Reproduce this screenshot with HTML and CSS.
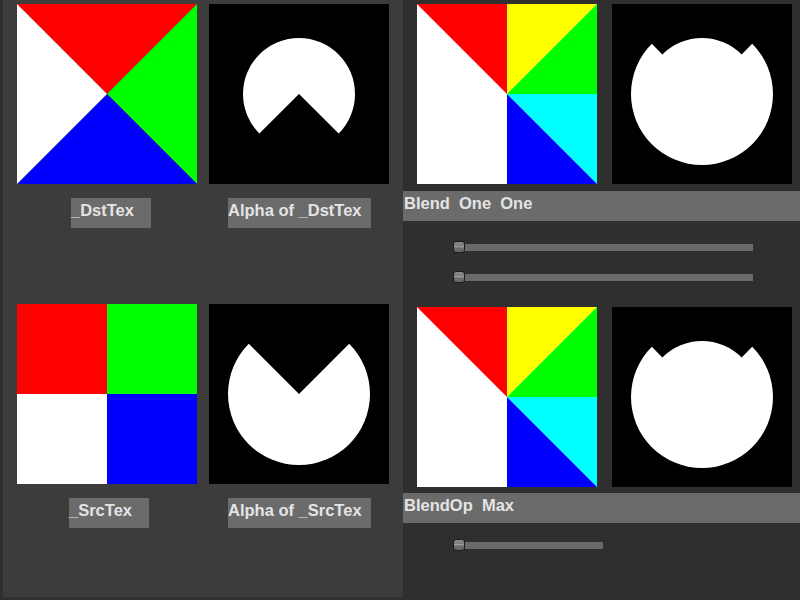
FILE: index.html
```html
<!DOCTYPE html>
<html>
<head>
<meta charset="utf-8">
<link rel="stylesheet" href="styles.css">
</head>
<body>
<div class="screen">
  <section class="inputs">
    <div class="tex-grid">
      <svg class="tex" viewBox="0 0 180 180" width="180" height="180">
        <polygon points="0,0 180,0 90,90" fill="#ff0000"/>
        <polygon points="180,0 180,180 90,90" fill="#00ff00"/>
        <polygon points="0,180 180,180 90,90" fill="#0000ff"/>
        <polygon points="0,0 0,180 90,90" fill="#ffffff"/>
      </svg>
      <svg class="tex" viewBox="0 0 180 180" width="180" height="180">
        <rect width="180" height="180" fill="#000"/>
        <path d="M90,90 L129.6,129.6 A56,56 0 1 0 50.4,129.6 Z" fill="#fff"/>
      </svg>
      <div class="label label-dst">_DstTex</div>
      <div class="label label-alpha">Alpha of _DstTex</div>
    </div>
    <div class="tex-grid second">
      <svg class="tex" viewBox="0 0 180 180" width="180" height="180">
        <rect x="0" y="0" width="90" height="90" fill="#ff0000"/>
        <rect x="90" y="0" width="90" height="90" fill="#00ff00"/>
        <rect x="0" y="90" width="90" height="90" fill="#ffffff"/>
        <rect x="90" y="90" width="90" height="90" fill="#0000ff"/>
      </svg>
      <svg class="tex" viewBox="0 0 180 180" width="180" height="180">
        <rect width="180" height="180" fill="#000"/>
        <path d="M90,90 L39.8,39.8 A71,71 0 1 0 140.2,39.8 Z" fill="#fff"/>
      </svg>
      <div class="label label-src">_SrcTex</div>
      <div class="label label-alpha">Alpha of _SrcTex</div>
    </div>
  </section>
  <section class="results">
    <div class="result-row">
      <svg class="tex" viewBox="0 0 180 180" width="180" height="180">
        <rect x="0" y="0" width="180" height="180" fill="#fff"/>
        <polygon points="0,0 90,0 90,90" fill="#ff0000"/>
        <polygon points="90,0 180,0 90,90" fill="#ffff00"/>
        <polygon points="180,0 180,90 90,90" fill="#00ff00"/>
        <polygon points="90,90 180,90 180,180" fill="#00ffff"/>
        <polygon points="90,90 180,180 90,180" fill="#0000ff"/>
      </svg>
      <svg class="tex" viewBox="0 0 180 180" width="180" height="180">
        <rect width="180" height="180" fill="#000"/>
        <path d="M39.8,39.8 L50.4,50.4 A56,56 0 0 1 129.6,50.4 L140.2,39.8 A71,71 0 1 1 39.8,39.8 Z" fill="#fff"/>
      </svg>
    </div>
    <div class="bar">Blend&nbsp;&nbsp;One&nbsp;&nbsp;One</div>
    <div class="sliders">
      <div class="slider"><div class="track long"></div><div class="knob"></div></div>
      <div class="slider"><div class="track long"></div><div class="knob"></div></div>
    </div>
    <div class="result-row second">
      <svg class="tex" viewBox="0 0 180 180" width="180" height="180">
        <rect x="0" y="0" width="180" height="180" fill="#fff"/>
        <polygon points="0,0 90,0 90,90" fill="#ff0000"/>
        <polygon points="90,0 180,0 90,90" fill="#ffff00"/>
        <polygon points="180,0 180,90 90,90" fill="#00ff00"/>
        <polygon points="90,90 180,90 180,180" fill="#00ffff"/>
        <polygon points="90,90 180,180 90,180" fill="#0000ff"/>
      </svg>
      <svg class="tex" viewBox="0 0 180 180" width="180" height="180">
        <rect width="180" height="180" fill="#000"/>
        <path d="M39.8,39.8 L50.4,50.4 A56,56 0 0 1 129.6,50.4 L140.2,39.8 A71,71 0 1 1 39.8,39.8 Z" fill="#fff"/>
      </svg>
    </div>
    <div class="bar">BlendOp&nbsp;&nbsp;Max</div>
    <div class="sliders single">
      <div class="slider"><div class="track short"></div><div class="knob"></div></div>
    </div>
  </section>
</div>
</body>
</html>
```
FILE: styles.css
```css
html, body {
  margin: 0;
  padding: 0;
  background: #2f2f2f;
  width: 800px;
  height: 600px;
  overflow: hidden;
}
.screen {
  display: flex;
  width: 800px;
  height: 600px;
  font-family: "Liberation Sans", Arial, sans-serif;
}
.inputs {
  width: 400px;
  height: 597px;
  margin-left: 3px;
  background: #3c3c3c;
  padding: 4px 0 0 14px;
  box-sizing: border-box;
}
.tex-grid {
  display: grid;
  grid-template-columns: 180px 180px;
  column-gap: 12px;
  row-gap: 14px;
}
.tex-grid.second {
  margin-top: 76px;
}
.tex {
  display: block;
}
.label {
  justify-self: start;
  height: 30px;
  box-sizing: border-box;
  padding-top: 3px;
  line-height: 18px;
  background: #6b6b6b;
  color: #e4e4e4;
  font-weight: bold;
  font-size: 16.5px;
  white-space: nowrap;
}
.label-dst { margin-left: 54px; width: 80px; }
.label-src { margin-left: 52px; width: 80px; }
.label-alpha { margin-left: 19px; width: 143px; }
.results {
  flex: 1;
  padding-top: 4px;
}
.result-row {
  display: flex;
  gap: 15px;
  padding-left: 14px;
}
.result-row.second {
  margin-top: 24px;
}
.bar {
  margin-top: 7px;
  height: 30px;
  box-sizing: border-box;
  padding: 3px 0 0 1px;
  line-height: 18px;
  background: #6b6b6b;
  color: #e4e4e4;
  font-weight: bold;
  font-size: 16.5px;
  white-space: nowrap;
}
.result-row.second + .bar {
  margin-top: 6px;
}
.sliders {
  margin-top: 20px;
  margin-left: 50px;
  display: flex;
  flex-direction: column;
  gap: 18px;
}
.sliders.single {
  margin-top: 16px;
}
.slider {
  position: relative;
  height: 12px;
  display: flex;
  align-items: center;
}
.track {
  height: 7px;
  margin-left: 2px;
  background: #6a6a6a;
}
.track.long { width: 298px; }
.track.short { width: 148px; }
.knob {
  position: absolute;
  left: 0;
  top: 0;
  width: 10px;
  height: 10px;
  border: 1px solid #1c1c1c;
  border-radius: 3px;
  background: linear-gradient(#8a8a8a 0%, #7a7a7a 40%, #9a9a9a 45%, #6e6e6e 60%, #626262 100%);
}
```
